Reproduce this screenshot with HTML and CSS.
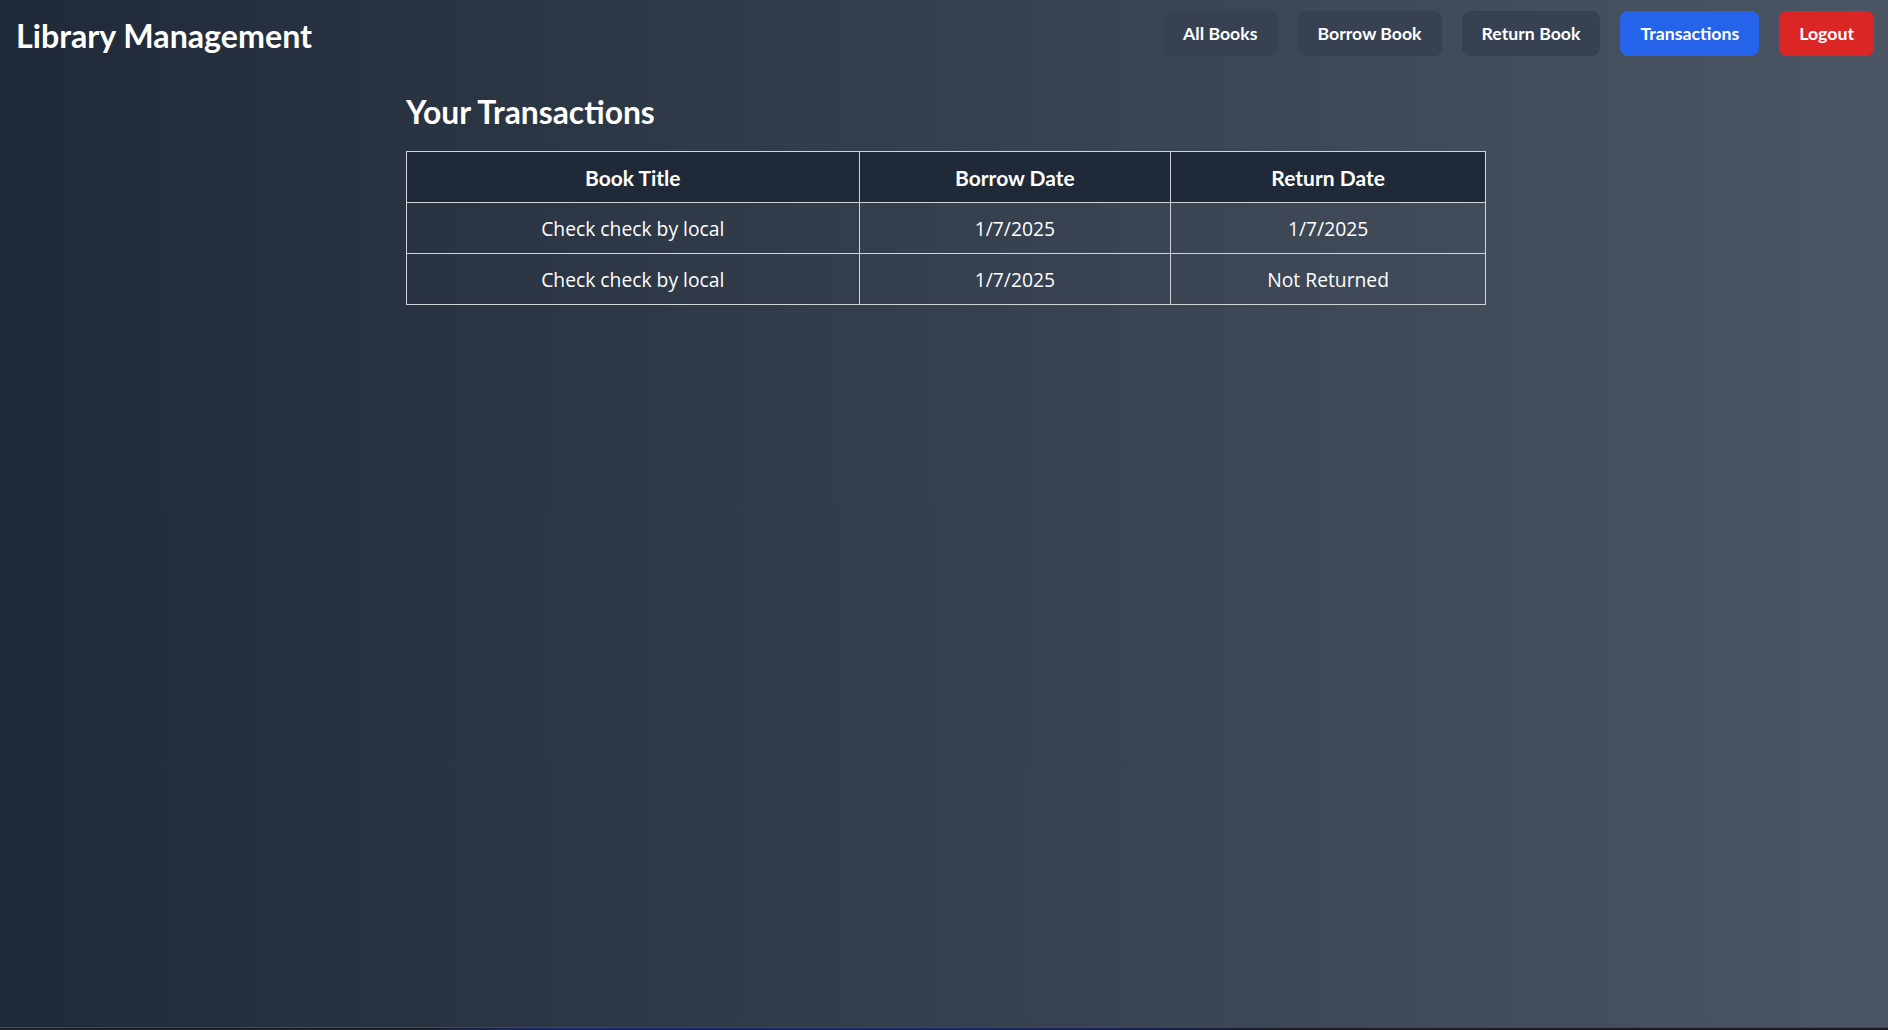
FILE: index.html
```html
<!DOCTYPE html>
<html lang="en">
<head>
<meta charset="utf-8">
<title>Library Management</title>
<link rel="stylesheet" href="styles.css">
</head>
<body>
<div class="page">
  <header class="topbar">
    <h1 class="brand">Library Management</h1>
    <nav class="nav">
      <button class="btn btn-dark">All Books</button>
      <button class="btn btn-dark">Borrow Book</button>
      <button class="btn btn-dark">Return Book</button>
      <button class="btn btn-blue">Transactions</button>
      <button class="btn btn-red">Logout</button>
    </nav>
  </header>
  <main class="content">
    <h2 class="title">Your Transactions</h2>
    <table class="tx">
      <thead>
        <tr>
          <th class="c1">Book Title</th>
          <th class="c2">Borrow Date</th>
          <th class="c3">Return Date</th>
        </tr>
      </thead>
      <tbody>
        <tr>
          <td>Check check by local</td>
          <td>1/7/2025</td>
          <td>1/7/2025</td>
        </tr>
        <tr>
          <td>Check check by local</td>
          <td>1/7/2025</td>
          <td>Not Returned</td>
        </tr>
      </tbody>
    </table>
  </main>
  <div class="strip"></div>
</div>
</body>
</html>
```

FILE: styles.css
```css
* { box-sizing: border-box; }
html, body { margin: 0; padding: 0; }
body {
  font-family: "Open Sans", "Noto Sans", sans-serif;
  color: #ffffff;
  background: #1f2937;
}
.page {
  min-height: 1030px;
  display: flex;
  flex-direction: column;
  background: linear-gradient(to right, #1f2937, #4b5563);
}
.topbar {
  display: flex;
  justify-content: space-between;
  align-items: center;
  padding: 11px 14px 0 16px;
}
.brand {
  margin: 4px 0 0;
  font-family: "Lato", "Open Sans", sans-serif;
  font-size: 32.2px;
  line-height: 36px;
  font-weight: 700;
}
.nav {
  display: flex;
  gap: 20px;
}
.btn {
  font-family: "Lato", "Open Sans", sans-serif;
  font-size: 17.7px;
  font-weight: 700;
  color: #ffffff;
  border: none;
  border-radius: 8px;
  height: 45px;
  padding: 0 20px;
  cursor: pointer;
}
.btn-dark { background: #374151; }
.btn-blue { background: #2563eb; }
.btn-red { background: #dc2626; }
.content {
  flex: 1;
  width: 1084px;
  margin: 0 auto;
  padding-left: 4px;
  padding-top: 38px;
}
.title {
  margin: 0 0 21px;
  font-family: "Lato", "Open Sans", sans-serif;
  font-size: 31.8px;
  line-height: 36px;
  font-weight: 700;
}
.tx {
  width: 1080px;
  border-collapse: collapse;
  font-size: 19.3px;
}
.tx th, .tx td {
  border: 1px solid #d1d5db;
  height: 51px;
  padding: 0 12px;
  text-align: center;
  font-weight: 400;
}
.tx th {
  background: #1f2937;
  font-family: "Lato", "Open Sans", sans-serif;
  font-size: 21px;
  font-weight: 700;
}
.tx .c1 { width: 453px; }
.tx .c2 { width: 312px; }
.tx .c3 { width: 315px; }
.strip {
  height: 3px;
  border-top: 1px solid #3d4b52;
  background: linear-gradient(to right, #1b1f29 0, #1b1f29 420px, #15246a 560px, #172566 900px, #172150 1150px, #1c1d24 1280px, #1c1d24 100%);
}
```
